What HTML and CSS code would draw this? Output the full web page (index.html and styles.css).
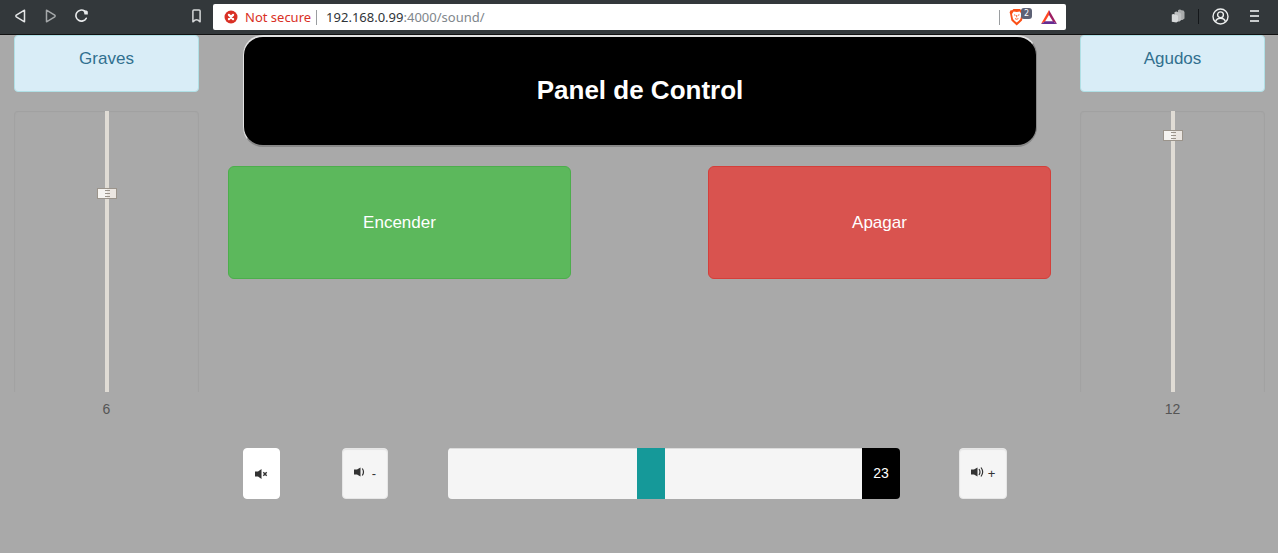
FILE: index.html
```html
<!DOCTYPE html>
<html lang="es">
<head>
<meta charset="utf-8">
<meta name="viewport" content="width=device-width, initial-scale=1">
<title>Panel de Control</title>
<link rel="stylesheet" href="styles.css">
</head>
<body>
<header class="browser">
  <div class="browser-side browser-left">
    <button class="icon-button" aria-label="Atrás"><svg width="12" height="14" viewBox="0 0 12 14"><path d="M9.500 1.200v11.600L1.300 7.800a1 1 0 0 1 0-1.600z" fill="none" stroke="#e4e6e7" stroke-width="1.500" stroke-linejoin="round"/></svg></button>
    <button class="icon-button" aria-label="Adelante"><svg width="12" height="14" viewBox="0 0 12 14"><path d="M1.500 1.200v11.600l8.200-5a1 1 0 0 0 0-1.600z" fill="none" stroke="#a5a8aa" stroke-width="1.500" stroke-linejoin="round"/></svg></button>
    <button class="icon-button" aria-label="Recargar"><svg width="14" height="14" viewBox="0 0 14 14"><path d="M9.500 2A5.500 5.500 0 1 0 11.200 9.300" fill="none" stroke="#e8eaeb" stroke-width="1.600" stroke-linecap="round"/><path d="M8.500 1.500h3l1.300 1v3H9.500z" fill="#e8eaeb"/></svg></button>
    <button class="icon-button bookmark" aria-label="Marcador"><svg width="9" height="14" viewBox="0 0 9 14"><path d="M.9 12.800V2q0-1 1-1h5.200q1 0 1 1v10.800l-2-1.600q-1.600-1-3.200 0z" fill="none" stroke="#d5d7d8" stroke-width="1.500" stroke-linejoin="round"/></svg></button>
  </div>
  <div class="address">
    <svg width="14" height="14" viewBox="0 0 14 14" aria-hidden="true"><circle cx="7" cy="7" r="6.500" fill="#d93025"/><path d="M4.900 4.900l4.200 4.200m0-4.200L4.900 9.100" stroke="#fff" stroke-width="2.200" stroke-linecap="round"/></svg>
    <span class="insecure">Not secure</span>
    <span class="divider"></span>
    <span class="url"><span class="host">192.168.0.99</span>:4000/sound/</span>
    <span class="divider divider-end"></span>
    <button class="icon-button shield" aria-label="Brave Shields, 2"><svg width="26" height="18" viewBox="0 0 26 18"><path d="M4.500 1h6.500l1.300 1.300 1.600-.1.900 2.100-.5 1.800-1.300 6.300L7.700 17.500 2.400 12.400 1.100 6.100.6 4.300l1-2.100 1.600.1z" fill="#fb5017"/><path d="M4.600 3.500l3.100.4 3.100-.4 1.600 2.600-1 4.900-1.500 1.700-2.200 1.800-2.200-1.800L4 11 3 6.100z" fill="#fff"/><path d="M5 6.800l1.500.5m3.900-.5l-1.500.5M7.700 7v2.300M6 10.600q1.700 1.300 3.400 0" fill="none" stroke="#fb5017" stroke-width=".9"/></svg><span class="count">2</span></button>
    <button class="icon-button" aria-label="Brave Rewards"><svg width="18" height="16" viewBox="0 0 18 16"><path d="M9 1L1 15l4.200-2.800L9 6z" fill="#ff4724"/><path d="M9 1l8 14-4.200-2.800L9 6z" fill="#9e1f63"/><path d="M1 15h16l-4.200-2.800H5.200z" fill="#662d91"/></svg></button>
  </div>
  <div class="browser-side browser-right">
    <button class="icon-button" aria-label="Extensiones"><svg width="14" height="14" viewBox="0 0 14 14"><path d="M7 1.200q2-1.500 3.500 0l2 .4 1 1.400v6.500l-2 1.500H7z" fill="#a9abac"/><path d="M3.500 3.200q2-1.500 3.500 0l2.200.6 1 1.200v6l-1.700 1.500H3.500z" fill="#bfc1c2"/><path d="M.8 5.600q1.800-1.200 3 0l2.700.6.500 1v5l-1.600 1.300-4.600-.8z" fill="#d8dadb"/></svg></button>
    <span class="divider divider-dark"></span>
    <button class="icon-button" aria-label="Perfil"><svg width="17" height="17" viewBox="0 0 17 17"><g fill="none" stroke="#eceeee" stroke-width="1.400"><circle cx="8.500" cy="8.500" r="7.500"/><circle cx="8.500" cy="6.800" r="2.900"/><path d="M3.500 13.800q1-3.600 5-3.600t5 3.600"/></g></svg></button>
    <button class="icon-button" aria-label="Menú"><svg width="9" height="14" viewBox="0 0 9 14"><path d="M0 2h9M0 7h9M0 12h9" stroke="#c8cbcc" stroke-width="2"/></svg></button>
  </div>
</header>

<main class="panel">
  <section class="tone">
    <label class="tone-label" for="graves">Graves</label>
    <div class="well"><input class="vertical-range" id="graves" type="range" min="-14" max="14" value="6"></div>
    <output class="tone-value" for="graves">6</output>
  </section>

  <section class="center">
    <h1 class="title">Panel de Control</h1>
    <div class="power">
      <button class="power-button power-on">Encender</button>
      <button class="power-button power-off">Apagar</button>
    </div>
    <div class="volume">
      <div><button class="volume-button mute" aria-label="Silenciar"><svg width="13" height="10" viewBox="0 0 13 10"><path d="M0 2.500h3L6.500 0v10L3 7.500H0z" fill="#333"/><path d="M8.300 3.200l3.400 3.600m0-3.600L8.300 6.800" stroke="#333" stroke-width="1.400"/></svg></button></div>
      <div><button class="volume-button step down"><svg width="11" height="10" viewBox="0 0 11 10"><path d="M0 2.500h3L6.500 .5v9L3 7.500H0z" fill="#333"/><path d="M8.300 1.500q2.400 3.500 0 7" fill="none" stroke="#333" stroke-width="1.200"/></svg><span>-</span></button></div>
      <div class="level">
        <input class="level-range" type="range" min="0" max="47" value="23" aria-label="Volumen" id="volumen">
        <output class="level-value" for="volumen">23</output>
      </div>
      <div><button class="volume-button step"><svg width="13" height="10" viewBox="0 0 13 10"><path d="M0 2.500h3L6.500 .5v9L3 7.500H0z" fill="#333"/><path d="M8 2q2 3 0 6m2-7.500q3.300 4.500 0 9" fill="none" stroke="#333" stroke-width="1.200"/></svg><span>+</span></button></div>
    </div>
  </section>

  <section class="tone">
    <label class="tone-label" for="agudos">Agudos</label>
    <div class="well"><input class="vertical-range" id="agudos" type="range" min="-14" max="14" value="12"></div>
    <output class="tone-value" for="agudos">12</output>
  </section>
</main>
</body>
</html>
```
FILE: styles.css
```css
* {
  box-sizing: border-box;
}

body {
  margin: 0;
  background: #a9a9a9;
  font-family: "Liberation Sans", Arial, sans-serif;
  font-size: 14px;
  line-height: 20px;
  color: #333;
}

button {
  font-family: inherit;
  cursor: pointer;
}

svg {
  display: block;
}

/* Browser bar */
.browser {
  display: grid;
  grid-template-columns: 213fr 853fr 212fr;
  align-items: center;
  height: 35px;
  background: #33383b;
  border-bottom: 1px solid #111;
}

.browser-side {
  display: flex;
  align-items: center;
  padding-bottom: 2px;
}

.browser-left {
  gap: 18px;
  padding-right: 12px;
  padding-left: 15px;
}

.browser-right {
  justify-content: flex-end;
  gap: 13px;
  padding-right: 19px;
}

.browser-right .icon-button:last-child {
  margin-left: 8px;
}

.icon-button {
  padding: 0;
  border: 0;
  background: none;
}

.bookmark {
  margin-left: auto;
}

.address {
  display: flex;
  align-items: center;
  height: 26px;
  padding: 0 8px 0 11px;
  border-radius: 2px;
  background: #fff;
  color: #80868b;
  font-family: "Noto Sans", sans-serif;
  font-size: 13px;
}

.insecure {
  margin: 0 5px 0 7px;
  color: #d93025;
}

.divider {
  width: 1px;
  height: 15px;
  background: #9a9da0;
}

.divider-end {
  margin: 0 9px 0 auto;
}

.divider-dark {
  background: #14171a;
}

.url {
  margin-left: 9px;
}

.host {
  color: #303438;
}

.shield {
  position: relative;
  margin-right: 5px;
}

.count {
  position: absolute;
  top: 0;
  right: 3px;
  width: 11px;
  height: 11px;
  border-radius: 3px;
  background: #5d6175;
  color: #fff;
  font: 8px/11px "DejaVu Sans", sans-serif;
  text-align: center;
}

/* Page */
.panel {
  display: grid;
  grid-template-columns: 185fr 823fr 185fr;
  gap: 29px;
  padding: 0 13px 0 14px;
}

.tone {
  display: flex;
  flex-direction: column;
  text-align: center;
}

.tone-label {
  height: 57px;
  margin-bottom: 19px;
  padding-top: 13px;
  border: 1px solid #b0e0e6;
  border-radius: 4px;
  background: #d9edf7;
  color: #31708f;
  font-size: 17px;
}

.well {
  display: flex;
  justify-content: center;
  height: 281px;
  border: 1px solid #a2a2a2;
  border-width: 0 1px;
  border-radius: 4px 4px 0 0;
  box-shadow: inset 0 1px 1px #a0a0a0;
}

.vertical-range {
  appearance: none;
  writing-mode: vertical-lr;
  direction: rtl;
  width: 20px;
  height: 100%;
  margin: 0;
  background: linear-gradient(#e0dcd5, #e0dcd5) center / 4px 100% no-repeat;
}

.vertical-range::-webkit-slider-thumb {
  appearance: none;
  width: 20px;
  height: 11px;
  border: 1px solid #9b948b;
  background:
    linear-gradient(#9b948b, #9b948b) 7px 1px / 5px 1px no-repeat,
    linear-gradient(#9b948b, #9b948b) 7px 4px / 5px 1px no-repeat,
    linear-gradient(#9b948b, #9b948b) 7px 7px / 5px 1px no-repeat,
    linear-gradient(90deg, #f5f3f0 50%, #ebe6e1 50%);
}

.tone-value {
  margin-top: 7px;
  color: #555;
}

.center {
  display: flex;
  flex-direction: column;
}

.title {
  margin: 0 14px 19px 15px;
  padding: 37px 20px 39px;
  border: 1px solid;
  border-width: 2px 1px;
  border-color: #e3e3e3 #888 #888 #e3e3e3;
  border-radius: 20px;
  background: #000;
  color: #fff;
  font-size: 26px;
  line-height: 32px;
  text-align: center;
}

.power {
  display: grid;
  grid-template-columns: 1fr 1fr;
  gap: 137px;
}

.power-button {
  height: 113px;
  border: 1px solid;
  border-radius: 6px;
  color: #fff;
  font-size: 17px;
}

.power-on {
  border-color: #4cae4c;
  background: #5cb85c;
}

.power-off {
  border-color: #d43f3a;
  background: #d9534f;
}

.volume {
  display: grid;
  grid-template-columns: 99fr 106fr 511fr 78fr;
  margin-top: 169px;
  padding: 0 14px 0 15px;
}

.volume-button {
  display: flex;
  align-items: center;
  justify-content: center;
  height: 51px;
  border: 1px solid #e6e6e6;
  border-radius: 4px;
  background: #f5f5f5;
  box-shadow: inset 0 1px 1px #e4e4e4;
  color: #333;
  font-size: 13px;
}

.mute {
  width: 37px;
  border-color: #fff;
  background: #fff;
  box-shadow: none;
}

.step {
  gap: 4px;
  width: 48px;
  padding: 0;
}

.step svg {
  margin-bottom: 3px;
}

.down {
  gap: 7px;
  width: 46px;
}

.level {
  display: flex;
  height: 51px;
  margin-right: 59px;
  overflow: hidden;
  border-radius: 4px;
}

.level-range {
  appearance: none;
  flex: 1;
  min-width: 0;
  height: 100%;
  margin: 0;
  background: #f5f5f5;
  box-shadow: inset 0 1px #dcdcdc;
}

.level-range::-webkit-slider-thumb {
  appearance: none;
  width: 28px;
  height: 51px;
  background: #159999;
}

.level-value {
  width: 38px;
  background: #000;
  color: #fff;
  line-height: 51px;
  text-align: center;
}
```
